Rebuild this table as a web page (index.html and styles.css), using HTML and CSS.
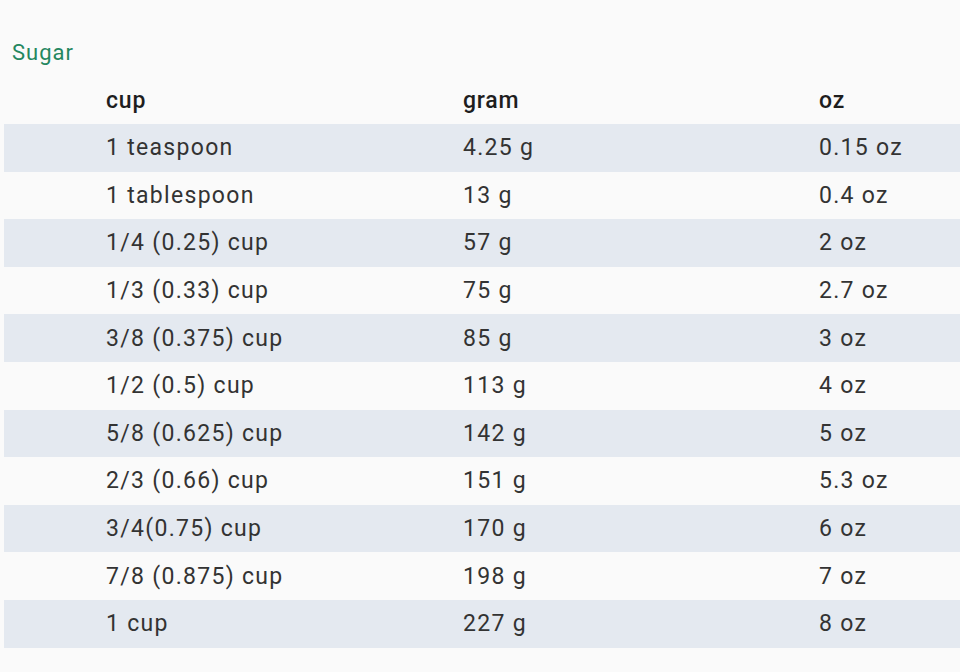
FILE: index.html
```html
<!DOCTYPE html>
<html>
<head>
<meta charset="utf-8">
<link rel="stylesheet" href="styles.css">
</head>
<body>
<div class="page">
  <div class="title">Sugar</div>
  <div class="table">
    <div class="row head"><span>cup</span><span>gram</span><span>oz</span></div>
    <div class="row"><span>1 teaspoon</span><span>4.25 g</span><span>0.15 oz</span></div>
    <div class="row"><span>1 tablespoon</span><span>13 g</span><span>0.4 oz</span></div>
    <div class="row"><span>1/4 (0.25) cup</span><span>57 g</span><span>2 oz</span></div>
    <div class="row"><span>1/3 (0.33) cup</span><span>75 g</span><span>2.7 oz</span></div>
    <div class="row"><span>3/8 (0.375) cup</span><span>85 g</span><span>3 oz</span></div>
    <div class="row"><span>1/2 (0.5) cup</span><span>113 g</span><span>4 oz</span></div>
    <div class="row"><span>5/8 (0.625) cup</span><span>142 g</span><span>5 oz</span></div>
    <div class="row"><span>2/3 (0.66) cup</span><span>151 g</span><span>5.3 oz</span></div>
    <div class="row"><span>3/4(0.75) cup</span><span>170 g</span><span>6 oz</span></div>
    <div class="row"><span>7/8 (0.875) cup</span><span>198 g</span><span>7 oz</span></div>
    <div class="row"><span>1 cup</span><span>227 g</span><span>8 oz</span></div>
  </div>
</div>
</body>
</html>
```
FILE: styles.css
```css
html, body {
  margin: 0;
  padding: 0;
  background: #fafafa;
}
body {
  font-family: Roboto, "Liberation Sans", sans-serif;
  color: #333333;
  width: 960px;
  height: 672px;
  overflow: hidden;
}
.page {
  padding: 40px 0 0 4px;
}
.title {
  padding-left: 8px;
  font-size: 22px;
  letter-spacing: 1px;
  line-height: 26px;
  color: #24875f;
  height: 36px;
}
.table {
  display: flex;
  flex-direction: column;
}
.row {
  display: grid;
  grid-template-columns: 357px 356px 1fr;
  padding-left: 102px;
  height: 47.6px;
  align-items: center;
  font-size: 23px;
  letter-spacing: 1.3px;
}
.row.head {
  height: 48px;
  font-weight: 500;
  letter-spacing: 0.8px;
  color: #1e1e1e;
}
.row:nth-child(even) {
  background: #e4e9f0;
}
```
